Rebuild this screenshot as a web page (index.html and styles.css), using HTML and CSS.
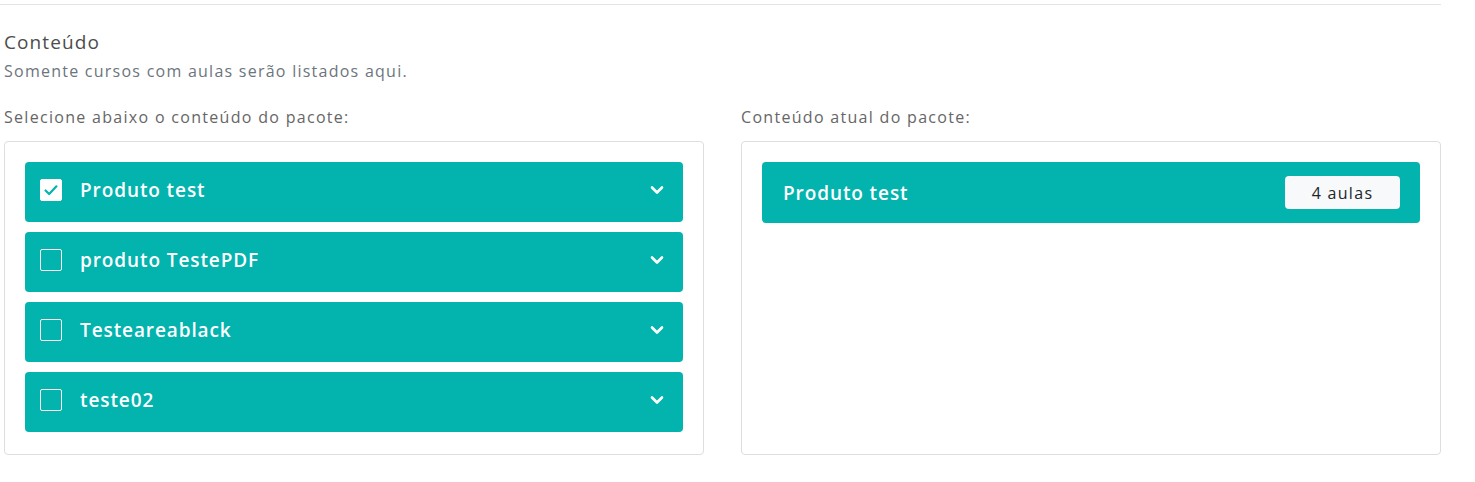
FILE: index.html
```html
<!DOCTYPE html>
<html lang="pt-BR">
<head>
    <meta charset="UTF-8">
    <meta name="viewport" content="width=device-width, initial-scale=1.0">
    <title>Conteúdo do pacote</title>
    <link rel="stylesheet" href="styles.css">
</head>
<body>
    <div class="page">
        <hr class="divider">
        <div class="section">
            <h2 class="section-title">Conteúdo</h2>
            <p class="section-help">Somente cursos com aulas serão listados aqui.</p>

            <div class="columns">
                <div class="column">
                    <label class="column-label">Selecione abaixo o conteúdo do pacote:</label>
                    <div class="panel">
                        <div class="course">
                            <span class="check checked">
                                <svg viewBox="0 0 22 22" width="22" height="22"><path d="M5 11.5l4 4 8-8.5" fill="none" stroke="#03b3ad" stroke-width="2.4" stroke-linecap="round" stroke-linejoin="round"/></svg>
                            </span>
                            <span class="course-name">Produto test</span>
                            <svg class="chevron" viewBox="0 0 16 16" width="16" height="16"><path d="M3 5.5l5 5 5-5" fill="none" stroke="#fff" stroke-width="2.6" stroke-linecap="round" stroke-linejoin="round"/></svg>
                        </div>
                        <div class="course">
                            <span class="check"></span>
                            <span class="course-name">produto TestePDF</span>
                            <svg class="chevron" viewBox="0 0 16 16" width="16" height="16"><path d="M3 5.5l5 5 5-5" fill="none" stroke="#fff" stroke-width="2.6" stroke-linecap="round" stroke-linejoin="round"/></svg>
                        </div>
                        <div class="course">
                            <span class="check"></span>
                            <span class="course-name">Testeareablack</span>
                            <svg class="chevron" viewBox="0 0 16 16" width="16" height="16"><path d="M3 5.5l5 5 5-5" fill="none" stroke="#fff" stroke-width="2.6" stroke-linecap="round" stroke-linejoin="round"/></svg>
                        </div>
                        <div class="course">
                            <span class="check"></span>
                            <span class="course-name">teste02</span>
                            <svg class="chevron" viewBox="0 0 16 16" width="16" height="16"><path d="M3 5.5l5 5 5-5" fill="none" stroke="#fff" stroke-width="2.6" stroke-linecap="round" stroke-linejoin="round"/></svg>
                        </div>
                    </div>
                </div>
                <div class="column">
                    <label class="column-label">Conteúdo atual do pacote:</label>
                    <div class="panel">
                        <div class="course current">
                            <span class="course-name">Produto test</span>
                            <span class="badge">4 aulas</span>
                        </div>
                    </div>
                </div>
            </div>
        </div>
    </div>
</body>
</html>
```

FILE: styles.css
```css
body {
    margin: 0;
    font-family: "Open Sans", sans-serif;
    background: #fff;
}
.page {
    width: 1441px;
}
.divider {
    margin: 4px 0 0 0;
    border: none;
    border-top: 1px solid #e3e3e3;
}
.section {
    padding-left: 4px;
}
.section-title {
    margin: 24px 0 0 0;
    font-size: 19px;
    font-weight: 400;
    letter-spacing: 1.1px;
    color: #4d4d4d;
    line-height: 26px;
}
.section-help {
    margin: 6px 0 0 0;
    font-size: 16px;
    letter-spacing: 1.25px;
    color: #6c757d;
    line-height: 20px;
}
.columns {
    display: grid;
    grid-template-columns: 700px 700px;
    column-gap: 37px;
    margin-top: 26px;
}
.column {
    display: flex;
    flex-direction: column;
}
.column-label {
    display: block;
    font-size: 16px;
    letter-spacing: 1.3px;
    color: #666;
    line-height: 20px;
    margin-bottom: 14px;
}
.panel {
    flex: 1;
    border: 1px solid #dedede;
    border-radius: 4px;
    padding: 20px 20px 22px 20px;
    display: flex;
    flex-direction: column;
    gap: 10px;
}
.course {
    display: flex;
    align-items: center;
    height: 60px;
    box-sizing: border-box;
    padding: 0 18px 4px 15px;
    background: #03b3ad;
    border-radius: 4px;
    color: #fff;
}
.check {
    width: 20px;
    height: 20px;
    border: 1.5px solid #fff;
    border-radius: 2px;
    margin-right: 18px;
    display: flex;
    align-items: center;
    justify-content: center;
}
.check.checked {
    background: #fff;
}
.course-name {
    font-size: 19px;
    font-weight: 600;
    letter-spacing: 0.9px;
    flex: 1;
}
.chevron {
    display: block;
}
.course.current {
    height: 61px;
    padding: 0 20px 0 21px;
}
.badge {
    background: #f8f9fa;
    color: #212529;
    font-size: 16px;
    letter-spacing: 1.3px;
    border-radius: 4px;
    width: 115px;
    height: 33px;
    display: flex;
    align-items: center;
    justify-content: center;
}
```
